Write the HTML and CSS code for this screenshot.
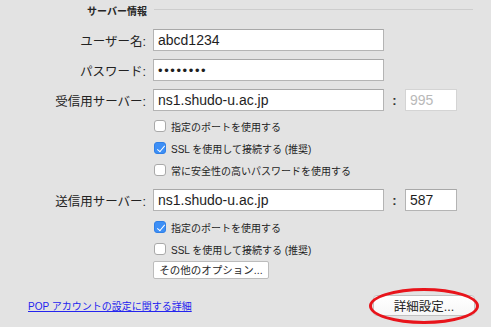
FILE: index.html
```html
<!DOCTYPE html>
<html lang="ja">
<head>
    <meta charset="UTF-8">
    <meta name="viewport" content="width=device-width, initial-scale=1.0">
    <title>サーバー情報</title>
    <link rel="stylesheet" href="styles.css">
</head>
<body>
    <div class="panel">
        <div class="section-head">
            <span class="section-title">サーバー情報</span>
            <span class="section-line"></span>
        </div>

        <div class="row first">
            <label class="label">ユーザー名:</label>
            <div class="field">abcd1234</div>
        </div>
        <div class="row">
            <label class="label">パスワード:</label>
            <div class="field password">••••••••</div>
        </div>
        <div class="row">
            <label class="label">受信用サーバー:</label>
            <div class="field">ns1.shudo-u.ac.jp</div>
            <span class="colon">:</span>
            <div class="field port disabled">995</div>
        </div>

        <div class="checks">
            <div class="check"><span class="box"></span>指定のポートを使用する</div>
            <div class="check"><span class="box checked"></span>SSL を使用して接続する (推奨)</div>
            <div class="check"><span class="box"></span>常に安全性の高いパスワードを使用する</div>
        </div>

        <div class="row">
            <label class="label">送信用サーバー:</label>
            <div class="field">ns1.shudo-u.ac.jp</div>
            <span class="colon">:</span>
            <div class="field port">587</div>
        </div>

        <div class="checks second">
            <div class="check"><span class="box checked"></span>指定のポートを使用する</div>
            <div class="check"><span class="box"></span>SSL を使用して接続する (推奨)</div>
        </div>

        <div class="options">
            <button class="small-button">その他のオプション...</button>
        </div>

        <div class="footer">
            <a class="help-link" href="#">POP アカウントの設定に関する詳細</a>
            <div class="advanced">
                <button class="push-button">詳細設定...</button>
                <span class="highlight"></span>
            </div>
        </div>
    </div>
</body>
</html>
```

FILE: styles.css
```css
* {
    margin: 0;
    padding: 0;
    box-sizing: border-box;
}

body {
    font-family: "Liberation Sans", "Noto Sans CJK JP", sans-serif;
    background: #e3e3e3;
    color: #222;
    width: 491px;
    height: 327px;
    overflow: hidden;
}

.section-head {
    display: flex;
    align-items: center;
    height: 20px;
    padding-left: 87px;
    padding-right: 18px;
}

.section-title {
    font-size: 10px;
    font-weight: 700;
    color: #262626;
}

.section-line {
    flex: 1;
    height: 1px;
    margin-left: 7px;
    margin-top: -2px;
    background: #cdcdcd;
}

.row {
    display: flex;
    align-items: center;
    height: 22px;
    margin-top: 8px;
}

.row.first {
    margin-top: 9px;
}

.label {
    width: 147px;
    padding-right: 1px;
    text-align: right;
    font-size: 12.5px;
    color: #222;
    margin-right: 6px;
}

.field {
    width: 231px;
    height: 22px;
    padding-left: 4px;
    display: flex;
    align-items: center;
    background: #fff;
    border: 1px solid #b4b4b4;
    border-top-color: #a8a8a8;
    font-size: 14px;
    color: #1e1e1e;
}

.password {
    letter-spacing: 1.6px;
    font-size: 13px;
}

.colon {
    width: 21px;
    text-align: center;
    font-size: 13px;
    font-weight: 700;
    color: #333;
}

.port {
    width: 52px;
}

.disabled {
    border-color: #d4d4d4;
    color: #b9b9b9;
}

.checks {
    margin-top: 4px;
    padding-left: 154px;
}

.checks.second {
    margin-top: 5px;
}

.check {
    display: flex;
    align-items: center;
    height: 22px;
    font-size: 10px;
    color: #1f1f1f;
}

.box {
    width: 12px;
    height: 12px;
    margin-right: 5px;
    background: #fff;
    border: 1px solid #a9a9a9;
    border-radius: 3px;
    position: relative;
}

.box.checked {
    background: #3d8ff6;
    border-color: #2f7fe6;
}

.box.checked::after {
    content: "";
    position: absolute;
    left: 3.5px;
    top: 0.5px;
    width: 3px;
    height: 7px;
    border-right: 1.6px solid #fff;
    border-bottom: 1.6px solid #fff;
    transform: rotate(40deg);
}

.options {
    padding-left: 153px;
}

.small-button {
    width: 116px;
    height: 18px;
    font-family: inherit;
    font-size: 10.5px;
    color: #1f1f1f;
    background: #fff;
    border: 1px solid #bcbcbc;
    border-radius: 2px;
}

.footer {
    display: flex;
    align-items: center;
    justify-content: space-between;
    margin-top: 16px;
    padding-left: 28px;
    padding-right: 16px;
}

.help-link {
    font-size: 10px;
    color: #2424ee;
    text-decoration: underline;
}

.advanced {
    position: relative;
}

.push-button {
    width: 102px;
    height: 21px;
    font-family: inherit;
    font-size: 12.5px;
    color: #222;
    background: linear-gradient(#ffffff, #f7f7f7);
    border: 1px solid #c2c2c2;
    border-radius: 4px;
}

.highlight {
    position: absolute;
    left: -4px;
    right: -4px;
    top: -7px;
    bottom: -8px;
    border: 3px solid #e8141b;
    border-radius: 50%;
}
```
